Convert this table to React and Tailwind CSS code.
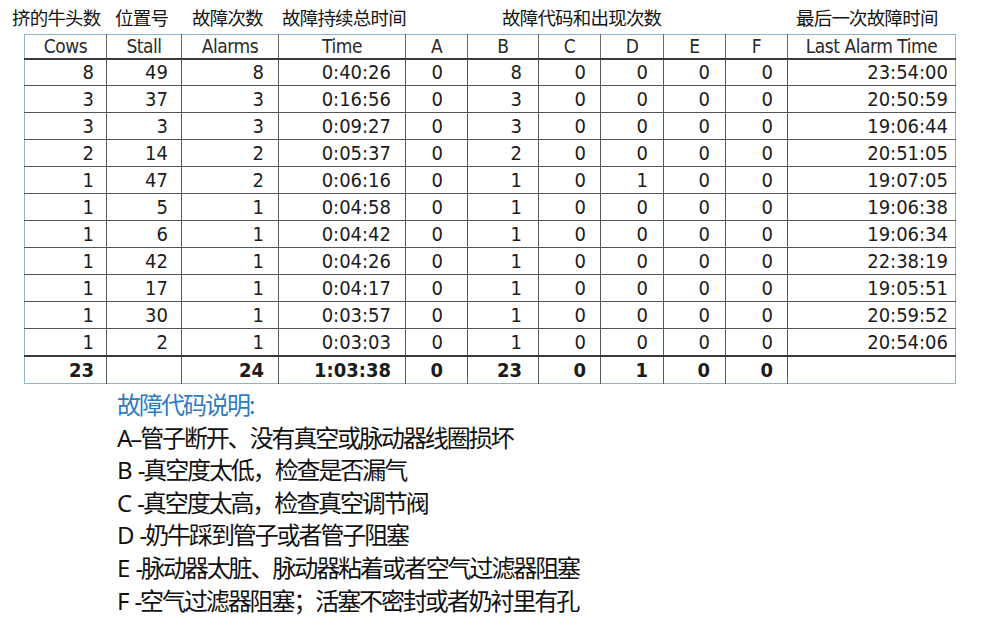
import React from 'react';

const cols = [
  { key: 'cows', label: 'Cows', w: 'w-[82px]', pad: 'pr-[12px]' },
  { key: 'stall', label: 'Stall', w: 'w-[75px]', pad: 'pr-[13px]' },
  { key: 'alarms', label: 'Alarms', w: 'w-[97px]', pad: 'pr-[14px]' },
  { key: 'time', label: 'Time', w: 'w-[127px]', pad: 'pr-[14px]' },
  { key: 'a', label: 'A', w: 'w-[62px]', pad: 'pr-[24px]' },
  { key: 'b', label: 'B', w: 'w-[71px]', pad: 'pr-[16px]' },
  { key: 'c', label: 'C', w: 'w-[62px]', pad: 'pr-[14px]' },
  { key: 'd', label: 'D', w: 'w-[63px]', pad: 'pr-[15px]' },
  { key: 'e', label: 'E', w: 'w-[62px]', pad: 'pr-[15px]' },
  { key: 'f', label: 'F', w: 'w-[62px]', pad: 'pr-[14px]' },
  { key: 'last', label: 'Last Alarm Time', w: 'w-[168px]', pad: 'pr-[7px]' },
];

const rows = [
  ['8', '49', '8', '0:40:26', '0', '8', '0', '0', '0', '0', '23:54:00'],
  ['3', '37', '3', '0:16:56', '0', '3', '0', '0', '0', '0', '20:50:59'],
  ['3', '3', '3', '0:09:27', '0', '3', '0', '0', '0', '0', '19:06:44'],
  ['2', '14', '2', '0:05:37', '0', '2', '0', '0', '0', '0', '20:51:05'],
  ['1', '47', '2', '0:06:16', '0', '1', '0', '1', '0', '0', '19:07:05'],
  ['1', '5', '1', '0:04:58', '0', '1', '0', '0', '0', '0', '19:06:38'],
  ['1', '6', '1', '0:04:42', '0', '1', '0', '0', '0', '0', '19:06:34'],
  ['1', '42', '1', '0:04:26', '0', '1', '0', '0', '0', '0', '22:38:19'],
  ['1', '17', '1', '0:04:17', '0', '1', '0', '0', '0', '0', '19:05:51'],
  ['1', '30', '1', '0:03:57', '0', '1', '0', '0', '0', '0', '20:59:52'],
  ['1', '2', '1', '0:03:03', '0', '1', '0', '0', '0', '0', '20:54:06'],
];

const total = ['23', '', '24', '1:03:38', '0', '23', '0', '1', '0', '0', ''];

const legend = [
  'A–管子断开、没有真空或脉动器线圈损坏',
  'B -真空度太低，检查是否漏气',
  'C -真空度太高，检查真空调节阀',
  'D -奶牛踩到管子或者管子阻塞',
  'E -脉动器太脏、脉动器粘着或者空气过滤器阻塞',
  'F -空气过滤器阻塞；活塞不密封或者奶衬里有孔',
];

const cjk = { fontFamily: '"Noto Sans", "Noto Sans CJK SC", sans-serif' };
const scan = { fontFamily: '"DejaVu Sans", "Liberation Sans", sans-serif' };

export default function App() {
  return (
    <div className="w-[990px] h-[635px] bg-white overflow-hidden text-[#151515]">
      {/* labels above the table */}
      <div className="flex pl-[12px] h-[34px] items-center text-[18.5px] tracking-[-0.8px] leading-none pt-[2px]" style={cjk}>
        <div className="w-[103px]">挤的牛头数</div>
        <div className="w-[77px]">位置号</div>
        <div className="w-[90px]">故障次数</div>
        <div className="w-[220px]">故障持续总时间</div>
        <div className="w-[294px]">故障代码和出现次数</div>
        <div>最后一次故障时间</div>
      </div>

      {/* scanned table */}
      <div className="pl-[24px]">
        <table
          className="table-fixed border-collapse w-[931px] border border-[#8fb2d3] text-[20px] leading-none font-stretch-condensed text-[#1c1c1c]"
          style={scan}
        >
          <thead>
            <tr className="h-[24px] border-b-2 border-[#3a3a3a]">
              {cols.map((c) => (
                <th
                  key={c.key}
                  className={`${c.w} font-normal text-center text-[19px] text-[#2a2a2a] border-r border-[#6a6a6a] last:border-r-0 tracking-tight`}
                >
                  {c.label}
                </th>
              ))}
            </tr>
          </thead>
          <tbody>
            {rows.map((r, i) => (
              <tr key={i} className="h-[27px] border-b border-[#555]">
                {r.map((v, j) => (
                  <td
                    key={j}
                    className={`text-right ${cols[j].pad} border-r border-[#5a5a5a] last:border-r-0`}
                  >
                    {v}
                  </td>
                ))}
              </tr>
            ))}
            <tr className="h-[28px] border-t-2 border-[#3a3a3a]">
              {total.map((v, j) => (
                <td
                  key={j}
                  className={`text-right font-bold ${cols[j].pad} border-r border-[#5a5a5a] last:border-r-0`}
                >
                  {v}
                </td>
              ))}
            </tr>
          </tbody>
        </table>
      </div>

      {/* legend */}
      <div className="pl-[117px] pt-[5px] leading-[32.6px]" style={cjk}>
        <div className="text-[24px] tracking-[-2px] text-[#2f7bc2]">故障代码说明:</div>
        {legend.map((line) => (
          <div key={line} className="text-[24px] tracking-[-2.1px] [word-spacing:3px] text-[#111]">
            {line}
          </div>
        ))}
      </div>
    </div>
  );
}
